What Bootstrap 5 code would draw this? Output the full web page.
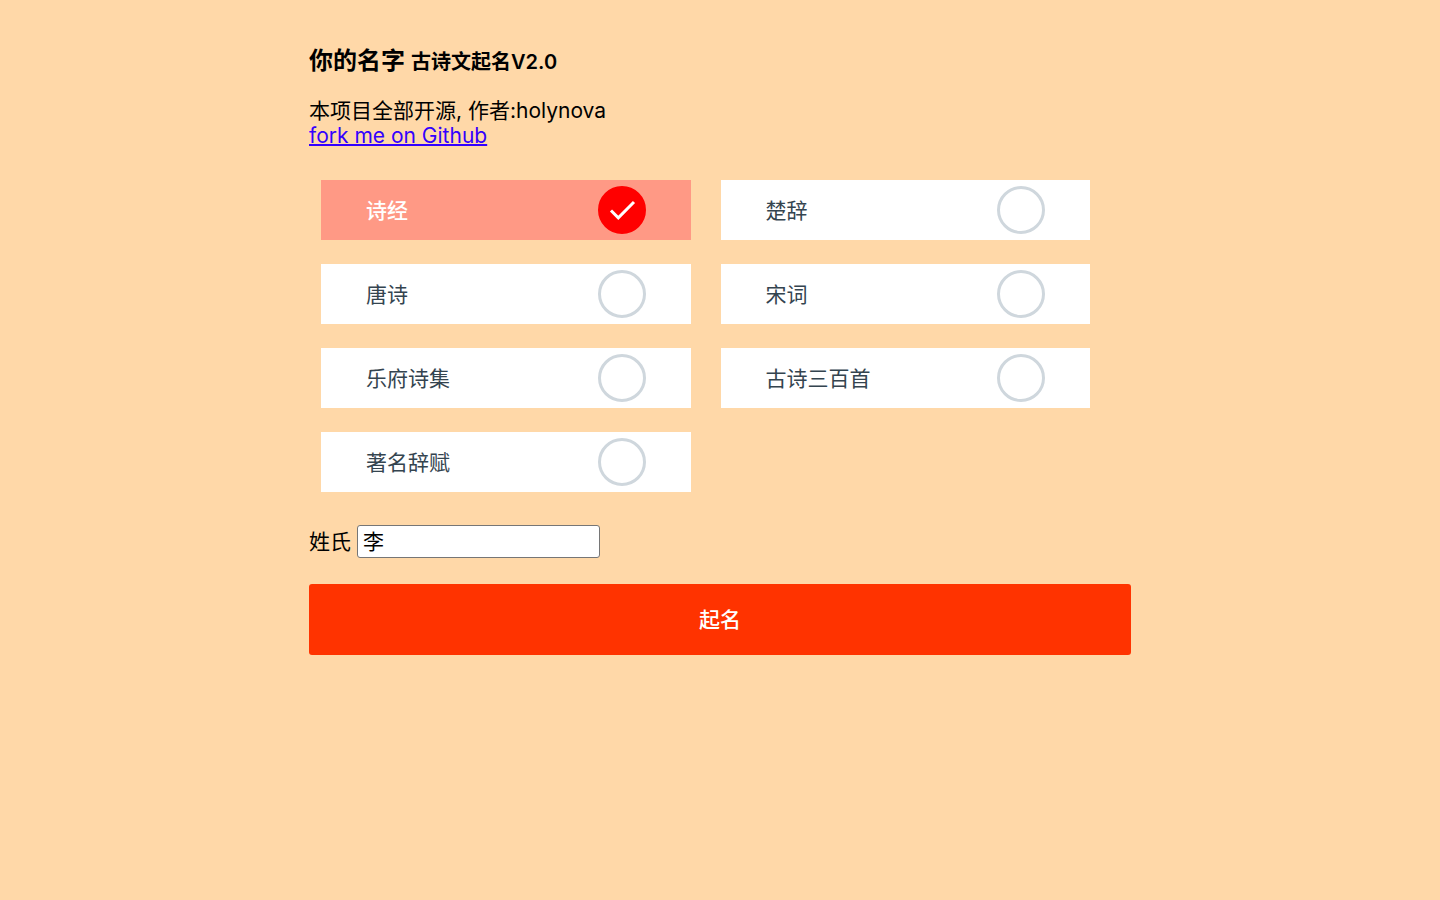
<!DOCTYPE html>
<html lang="zh-CN">
<head>
<meta charset="utf-8">
<meta name="viewport" content="width=device-width, initial-scale=1">
<title>你的名字 古诗文起名</title>
<link href="https://cdn.jsdelivr.net/npm/bootstrap@5.3.0/dist/css/bootstrap.min.css" rel="stylesheet">
<style>
  body { background: #ffd8a8; color: #000; font: 21px/25px Inter, "Noto Sans CJK SC", sans-serif; }
  .page { max-width: 822px; padding-top: 46px; }
  .site-title { font-size: 24px; line-height: 30px; font-weight: 600; margin-bottom: 21px; }
  .site-title span { font-size: 20px; }
  .intro { margin-bottom: 32px; }
  .intro a { color: #3300ff; text-decoration-thickness: 2px; }
  .books { padding: 0 11px 0 12px; }
  .book-cell { padding: 0 30px 24px 0; }
  .book { height: 60px; padding: 0 45px; background: #fff; color: #34444f; cursor: pointer; }
  .book:has(:checked) { background: #ff9985; color: #fff; font-weight: 500; }
  .book .form-check-input { width: 48px; height: 48px; border: 3px solid #cfd7dd; border-radius: 50%; background-color: #fff; }
  .book .form-check-input:checked {
    border-color: #ff0000; background-color: #ff0000; background-size: 48px 48px; background-origin: border-box;
    background-image: url("data:image/svg+xml,%3Csvg xmlns='http://www.w3.org/2000/svg' viewBox='0 0 48 48'%3E%3Cpath d='M13 24.5l7.3 7.3L36 16' fill='none' stroke='white' stroke-width='3'/%3E%3C/svg%3E");
  }
  .surname { margin: 9px 0 26px; gap: 6px; }
  .surname input { width: 243px; height: 33px; padding: 0 5px 3px; border: 1px solid #767676; border-radius: 3px; background: #fff; color: #000; }
  .btn-name { height: 71px; background: #ff3300; color: #fff; border: 0; border-radius: 3px; font-size: 21px; font-weight: 500; }
  .btn-name:hover { background: #e62e00; color: #fff; }
</style>
</head>
<body>
<main class="page mx-auto">
  <h1 class="site-title">你的名字 <span>古诗文起名V2.0</span></h1>
  <p class="intro">本项目全部开源, 作者:holynova<br><a href="#">fork me on Github</a></p>
  <form>
    <div class="books row g-0">
      <div class="book-cell col-6"><label class="book d-flex align-items-center justify-content-between">诗经<input class="form-check-input m-0" type="checkbox" checked></label></div>
      <div class="book-cell col-6"><label class="book d-flex align-items-center justify-content-between">楚辞<input class="form-check-input m-0" type="checkbox"></label></div>
      <div class="book-cell col-6"><label class="book d-flex align-items-center justify-content-between">唐诗<input class="form-check-input m-0" type="checkbox"></label></div>
      <div class="book-cell col-6"><label class="book d-flex align-items-center justify-content-between">宋词<input class="form-check-input m-0" type="checkbox"></label></div>
      <div class="book-cell col-6"><label class="book d-flex align-items-center justify-content-between">乐府诗集<input class="form-check-input m-0" type="checkbox"></label></div>
      <div class="book-cell col-6"><label class="book d-flex align-items-center justify-content-between">古诗三百首<input class="form-check-input m-0" type="checkbox"></label></div>
      <div class="book-cell col-6"><label class="book d-flex align-items-center justify-content-between">著名辞赋<input class="form-check-input m-0" type="checkbox"></label></div>
    </div>
    <div class="surname d-flex align-items-center">
      <label for="surname">姓氏</label>
      <input id="surname" type="text" value="李">
    </div>
    <button class="btn btn-name w-100" type="button">起名</button>
  </form>
</main>
<script src="https://cdn.jsdelivr.net/npm/bootstrap@5.3.0/dist/js/bootstrap.bundle.min.js"></script>
</body>
</html>
